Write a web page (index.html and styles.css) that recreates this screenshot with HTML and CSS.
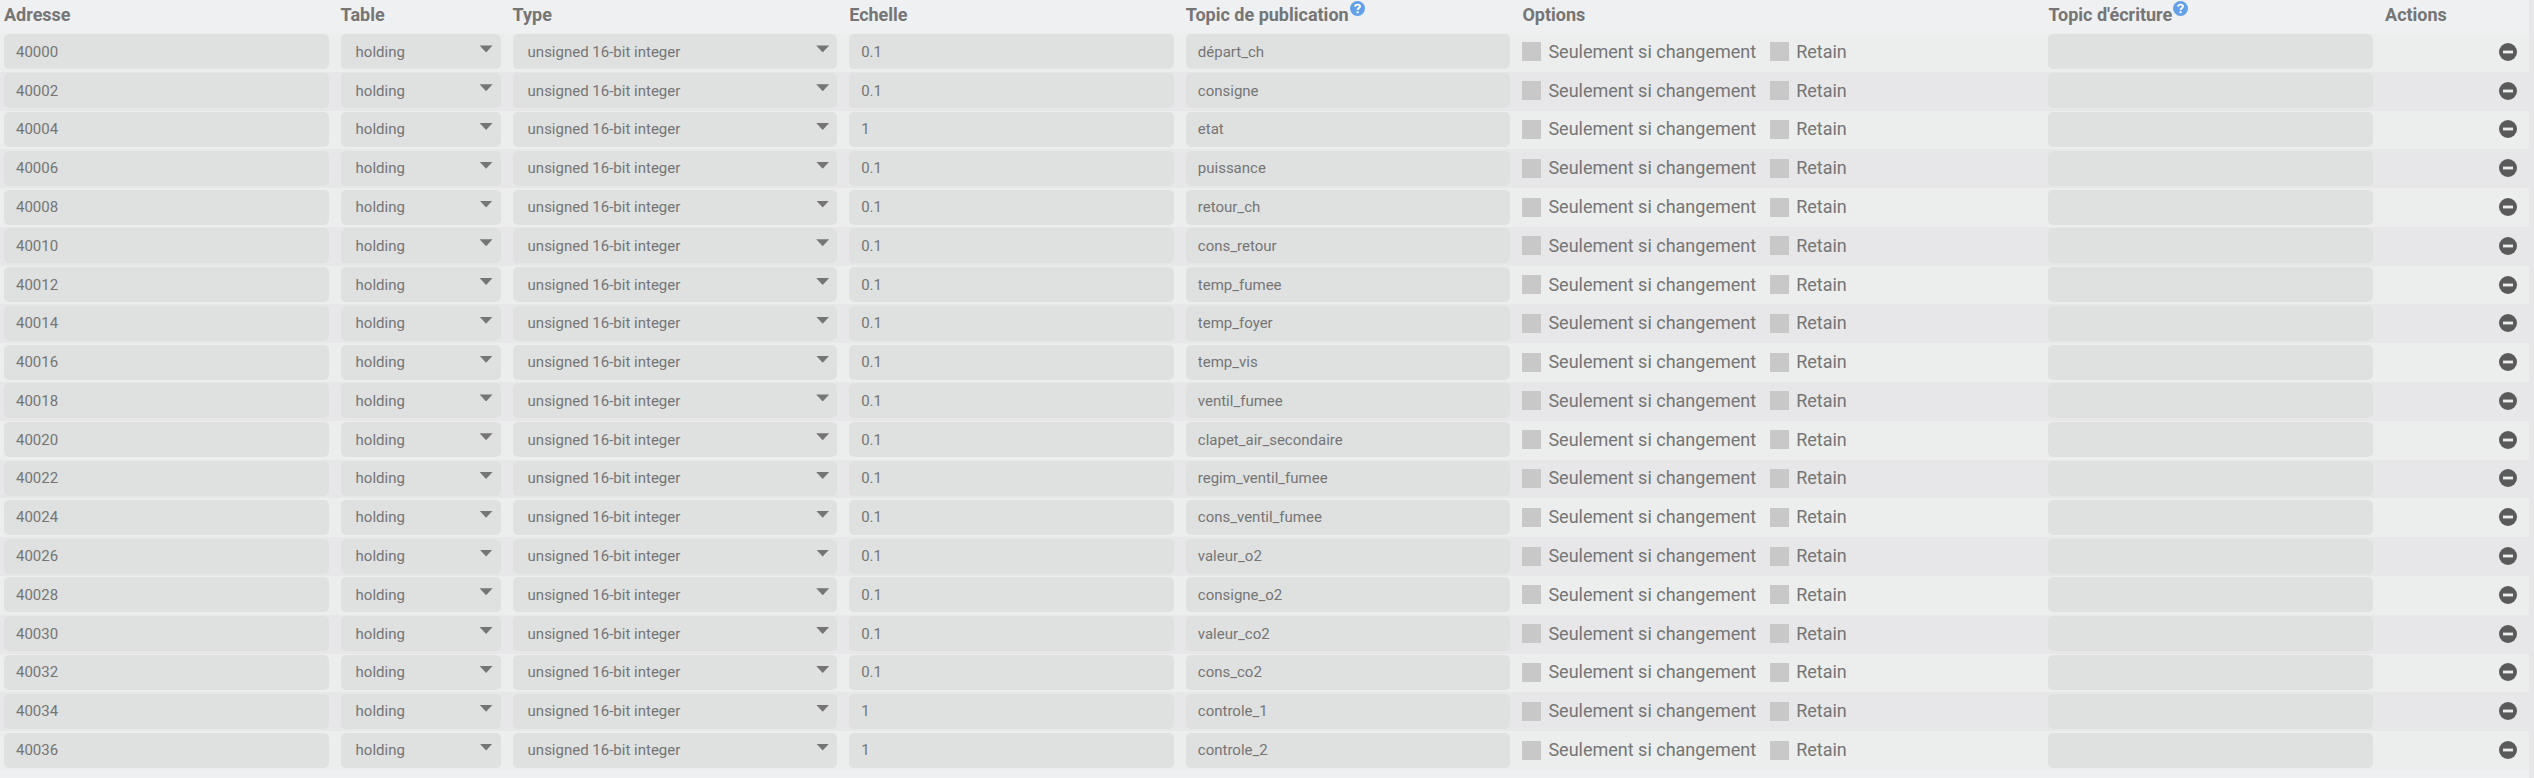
FILE: index.html
```html
<!DOCTYPE html>
<html lang="fr">
<head>
<meta charset="utf-8">
<title>Registres</title>
<link rel="stylesheet" href="styles.css">
</head>
<body>
<main class="panel">
<table class="registers">
<colgroup>
<col class="col-field"><col class="col-table"><col class="col-field"><col class="col-field">
<col class="col-field"><col class="col-options"><col class="col-field"><col class="col-actions">
</colgroup>
<thead>
<tr>
<th scope="col">Adresse</th>
<th scope="col">Table</th>
<th scope="col">Type</th>
<th scope="col">Echelle</th>
<th scope="col"><span class="heading">Topic de publication<svg class="help" viewBox="0 0 15 15" aria-hidden="true"><circle cx="7.5" cy="7.5" r="7.5" fill="#62a0ea"/><path d="M5 5.6C5.2 4.1 6.2 3.6 7.5 3.6c1.5 0 2.5.8 2.5 1.9 0 1.7-2.4 1.6-2.4 3.4" fill="none" stroke="#fff" stroke-width="1.9"/><rect x="6.6" y="10.2" width="2" height="2" fill="#fff"/></svg></span></th>
<th scope="col">Options</th>
<th scope="col"><span class="heading">Topic d'écriture<svg class="help" viewBox="0 0 15 15" aria-hidden="true"><circle cx="7.5" cy="7.5" r="7.5" fill="#62a0ea"/><path d="M5 5.6C5.2 4.1 6.2 3.6 7.5 3.6c1.5 0 2.5.8 2.5 1.9 0 1.7-2.4 1.6-2.4 3.4" fill="none" stroke="#fff" stroke-width="1.9"/><rect x="6.6" y="10.2" width="2" height="2" fill="#fff"/></svg></span></th>
<th scope="col">Actions</th>
</tr>
</thead>
<tbody id="rows"></tbody>
</table>
</main>
<script src="app.js"></script>
</body>
</html>
```

FILE: styles.css
```css
* {
  box-sizing: border-box;
}

body {
  margin: 0;
  background: #e7e7e9;
  color: #757575;
  font-family: Roboto, "Noto Sans", sans-serif;
  font-size: 18px;
  line-height: 24px;
}

.panel {
  min-height: 100vh;
  margin-right: 5px;
  padding-bottom: 8px;
  background: #eff0f2;
}

.registers {
  width: 100%;
  height: calc(100vh - 8px);
  table-layout: fixed;
  border-collapse: collapse;
}

.col-field { width: 13.31%; }
.col-table { width: 6.8%; }
.col-options { width: 20.8%; }
.col-actions { width: 5.85%; }

th {
  height: 33px;
  padding: 3px 8px 6px 4px;
  text-align: left;
  font-weight: 700;
  vertical-align: top;
  white-space: nowrap;
}

.heading {
  display: flex;
  align-items: flex-start;
  gap: 1px;
}

.help {
  width: 15px;
  height: 15px;
  margin-top: -2px;
}

td {
  padding: 1px 8px 2px 4px;
  vertical-align: middle;
}

tbody tr:nth-child(odd) { background: #eceeed; }
tbody tr:nth-child(even) { background: #e7e7e9; }

.field {
  display: block;
  width: 100%;
  height: 35px;
  margin: 0;
  padding: 0 12px;
  border: 0;
  border-radius: 5px;
  background: #dfe1e0;
  color: #757575;
  font: inherit;
  font-size: 15px;
}

.select {
  position: relative;
  display: block;
}

.select .field {
  appearance: none;
  padding: 0 15px;
}

.select::after {
  content: "";
  position: absolute;
  top: 11px;
  right: 8px;
  width: 13px;
  height: 7px;
  background: #757575;
  clip-path: polygon(0 0, 100% 0, 50% 100%);
  pointer-events: none;
}

.options {
  display: flex;
  gap: 14px;
  white-space: nowrap;
}

.option {
  display: flex;
  align-items: center;
  gap: 7px;
}

.option input {
  appearance: none;
  width: 19px;
  height: 19px;
  margin: 0;
  background: #c8c8c8;
}

.option input:checked { background: #757575; }

.actions {
  padding-right: 12px;
}

.remove {
  display: block;
  width: 18px;
  height: 18px;
  margin-left: auto;
  padding: 0;
  border: 0;
  background: none;
  cursor: pointer;
}

.remove svg {
  display: block;
}
```

FILE: app.js
```js
const registers = [
  ["40000", "0.1", "départ_ch"],
  ["40002", "0.1", "consigne"],
  ["40004", "1", "etat"],
  ["40006", "0.1", "puissance"],
  ["40008", "0.1", "retour_ch"],
  ["40010", "0.1", "cons_retour"],
  ["40012", "0.1", "temp_fumee"],
  ["40014", "0.1", "temp_foyer"],
  ["40016", "0.1", "temp_vis"],
  ["40018", "0.1", "ventil_fumee"],
  ["40020", "0.1", "clapet_air_secondaire"],
  ["40022", "0.1", "regim_ventil_fumee"],
  ["40024", "0.1", "cons_ventil_fumee"],
  ["40026", "0.1", "valeur_o2"],
  ["40028", "0.1", "consigne_o2"],
  ["40030", "0.1", "valeur_co2"],
  ["40032", "0.1", "cons_co2"],
  ["40034", "1", "controle_1"],
  ["40036", "1", "controle_2"]
];

const input = (label, value) =>
  `<td><input class="field" type="text" aria-label="${label}" value="${value}"></td>`;

const select = (label, value) =>
  `<td><span class="select"><select class="field" aria-label="${label}"><option>${value}</option></select></span></td>`;

document.getElementById("rows").innerHTML = registers.map(([address, scale, topic]) => `
<tr>
${input("Adresse", address)}
${select("Table", "holding")}
${select("Type", "unsigned 16-bit integer")}
${input("Echelle", scale)}
${input("Topic de publication", topic)}
<td><div class="options">
<label class="option"><input type="checkbox">Seulement si changement</label>
<label class="option"><input type="checkbox">Retain</label>
</div></td>
${input("Topic d'écriture", "")}
<td class="actions"><button class="remove" type="button" aria-label="Supprimer ${address}">
<svg width="18" height="18" viewBox="0 0 18 18" aria-hidden="true"><circle cx="9" cy="9" r="9" fill="#5a5a5a"/><rect x="4" y="7.6" width="10" height="2.8" fill="#eceeed"/></svg>
</button></td>
</tr>`).join("");
```
